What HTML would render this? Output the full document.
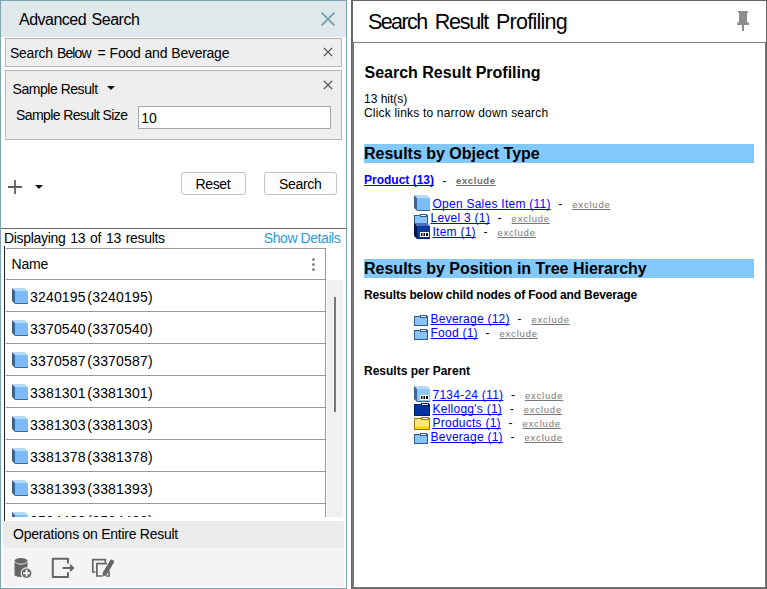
<!DOCTYPE html>
<html><head><meta charset="utf-8">
<style>
*{box-sizing:border-box;margin:0;padding:0}
html,body{width:767px;height:589px;overflow:hidden;background:#fff}
body{position:relative;font-family:"Liberation Sans",sans-serif;color:#000}
.a{position:absolute}
.t{position:absolute;white-space:pre;line-height:1}
.s14{font-size:14px}
.s12{font-size:12px}
.rw{letter-spacing:.18px;word-spacing:-2.5px}
svg{position:absolute;overflow:visible}
a{color:#0000ff;text-decoration:underline;text-decoration-skip-ink:none}
.ex{color:#777;font-size:9.5px;letter-spacing:.8px}
</style></head><body>
<svg width="0" height="0" style="position:absolute">
<defs>
<symbol id="cube" viewBox="0 0 16 16">
<polygon points="0,0 13,0 16,3 3,3" fill="#b5dafc"/>
<polygon points="0,0 3,3 3,16 0,13" fill="#3d6493"/>
<rect x="3" y="3" width="13" height="12" fill="#7cbcf8"/>
<rect x="3" y="15" width="13" height="1" fill="#3d6493"/>
</symbol>
</defs>
</svg>

<!-- LEFT PANEL -->
<div class="a" style="left:0;top:0;width:347px;height:589px;border:1px solid #7fa6ae;background:#fff"></div>
<div class="a" style="left:1px;top:1px;width:345px;height:36px;background:#dfe8eb"></div>
<div class="t" style="left:19px;top:12px;font-size:16px;letter-spacing:-.5px;word-spacing:1.5px">Advanced Search</div>
<svg style="left:321px;top:12px" width="14" height="14"><path d="M0.5 0.5L13.5 13.5M13.5 0.5L0.5 13.5" stroke="#7fa6ae" stroke-width="1.9"/></svg>

<div class="a" style="left:5px;top:38px;width:337px;height:29px;border:1px solid #b7b7b7;background:#eeeeee"></div>
<div class="t s14" style="left:10px;top:46px;letter-spacing:-.26px;word-spacing:.5px">Search <span style="letter-spacing:-.85px;margin-right:2.6px">Below</span> = Food and Beverage</div>
<svg style="left:323px;top:47px" width="10" height="10"><path d="M0.8 0.8L9.2 9.2M9.2 0.8L0.8 9.2" stroke="#484848" stroke-width="1.2"/></svg>

<div class="a" style="left:5px;top:70px;width:337px;height:70px;border:1px solid #b7b7b7;background:#eeeeee"></div>
<div class="t s14" style="left:12.5px;top:82px;letter-spacing:-.46px">Sample Result</div>
<svg style="left:107px;top:86px" width="9" height="5"><path d="M0 0H8L4 4Z" fill="#111"/></svg>
<svg style="left:323px;top:80px" width="10" height="10"><path d="M0.8 0.8L9.2 9.2M9.2 0.8L0.8 9.2" stroke="#484848" stroke-width="1.2"/></svg>
<div class="t s14" style="left:16px;top:108px;letter-spacing:-.6px">Sample Result Size</div>
<div class="a" style="left:138px;top:106px;width:193px;height:23px;border:1px solid #a3a7ab;background:#fff"></div>
<div class="t s14" style="left:141.2px;top:111px">10</div>

<svg style="left:8px;top:180px" width="14" height="14"><path d="M7 0V14M0 7H14" stroke="#606060" stroke-width="1.8"/></svg>
<svg style="left:35px;top:185px" width="9" height="5"><path d="M0 0H8L4 4Z" fill="#111"/></svg>

<div class="a" style="left:181px;top:172px;width:65px;height:23px;border:1px solid #c4c4c4;border-radius:3px;background:#fdfdfd"></div>
<div class="t s14" style="left:195.5px;top:177px;letter-spacing:-.35px">Reset</div>
<div class="a" style="left:264px;top:172px;width:73px;height:23px;border:1px solid #c4c4c4;border-radius:3px;background:#fdfdfd"></div>
<div class="t s14" style="left:279px;top:177px;letter-spacing:-.3px">Search</div>

<div class="a" style="left:1px;top:228px;width:345px;height:1px;background:#6a6a6a"></div>
<div class="t s14" style="left:3.9px;top:231px;letter-spacing:-.3px;word-spacing:1.2px">Displaying 13 of 13 results</div>
<div class="t s14" style="left:263.8px;top:231px;letter-spacing:-.43px;color:#2b9bd9">Show Details</div>

<!-- table -->
<div class="a" style="left:4px;top:246px;width:1px;height:275px;background:#222"></div>
<div class="a" style="left:6px;top:248px;width:320px;height:269px;border-top:1px solid #999;border-right:1px solid #999;background:#fff"></div>
<div class="a" style="left:6px;top:279px;width:320px;height:1px;background:#999"></div>
<div class="t s14" style="left:11.6px;top:257px;letter-spacing:-.2px">Name</div>
<div class="a" style="left:312.3px;top:257.5px;width:3px;height:3px;border-radius:50%;background:#888"></div>
<div class="a" style="left:312.3px;top:262.5px;width:3px;height:3px;border-radius:50%;background:#888"></div>
<div class="a" style="left:312.3px;top:267.5px;width:3px;height:3px;border-radius:50%;background:#888"></div>

<div class="a" style="left:6px;top:311px;width:319px;height:1px;background:#999"></div>
<div class="a" style="left:6px;top:343px;width:319px;height:1px;background:#999"></div>
<div class="a" style="left:6px;top:375px;width:319px;height:1px;background:#999"></div>
<div class="a" style="left:6px;top:407px;width:319px;height:1px;background:#999"></div>
<div class="a" style="left:6px;top:439px;width:319px;height:1px;background:#999"></div>
<div class="a" style="left:6px;top:471px;width:319px;height:1px;background:#999"></div>
<div class="a" style="left:6px;top:503px;width:319px;height:1px;background:#999"></div>

<svg style="left:12px;top:288px" width="16" height="16"><use href="#cube"/></svg>
<div class="t s14 rw" style="left:30px;top:290px">3240195 (3240195)</div>
<svg style="left:12px;top:320px" width="16" height="16"><use href="#cube"/></svg>
<div class="t s14 rw" style="left:30px;top:322px">3370540 (3370540)</div>
<svg style="left:12px;top:352px" width="16" height="16"><use href="#cube"/></svg>
<div class="t s14 rw" style="left:30px;top:354px">3370587 (3370587)</div>
<svg style="left:12px;top:384px" width="16" height="16"><use href="#cube"/></svg>
<div class="t s14 rw" style="left:30px;top:386px">3381301 (3381301)</div>
<svg style="left:12px;top:416px" width="16" height="16"><use href="#cube"/></svg>
<div class="t s14 rw" style="left:30px;top:418px">3381303 (3381303)</div>
<svg style="left:12px;top:448px" width="16" height="16"><use href="#cube"/></svg>
<div class="t s14 rw" style="left:30px;top:450px">3381378 (3381378)</div>
<svg style="left:12px;top:480px" width="16" height="16"><use href="#cube"/></svg>
<div class="t s14 rw" style="left:30px;top:482px">3381393 (3381393)</div>
<div class="a" style="left:5px;top:504px;width:320px;height:13px;overflow:hidden">
<svg style="left:7px;top:8px" width="16" height="16"><use href="#cube"/></svg>
<div class="t s14 rw" style="left:25px;top:10px">3504488 (3504488)</div>
</div>

<!-- scrollbar -->
<div class="a" style="left:327px;top:280px;width:16px;height:237px;background:#f0f0f0"></div>
<div class="a" style="left:334px;top:297px;width:2px;height:115px;background:#787878"></div>

<!-- operations -->
<div class="a" style="left:3px;top:521px;width:341px;height:27px;background:#ebebeb"></div>
<div class="t s14" style="left:13px;top:527px;letter-spacing:-.26px">Operations on Entire Result</div>
<div class="a" style="left:3px;top:548px;width:341px;height:39px;background:#f4f4f4"></div>

<!-- db icon -->
<svg style="left:14px;top:557px" width="20" height="22">
<ellipse cx="7" cy="3.85" rx="6.5" ry="2.85" fill="#666"/>
<path d="M0.5 4.9Q7 10.7 13.5 4.9V18.5Q7 21.5 0.5 18.5Z" fill="#666"/>
<circle cx="12.6" cy="16.2" r="5.9" fill="#f4f4f4"/>
<circle cx="12.6" cy="16.2" r="4.8" fill="#666"/>
<path d="M12.6 12.8V19.6M9.2 16.2H16" stroke="#fff" stroke-width="1.9"/>
</svg>
<!-- export icon -->
<svg style="left:51px;top:557px" width="26" height="22">
<path d="M17 6.5V1.8H1.8V20H17V15.2" fill="none" stroke="#666" stroke-width="2" stroke-linejoin="round"/>
<path d="M11.7 11H20" stroke="#666" stroke-width="2"/>
<path d="M19 6.8L23.5 11L19 15.2Z" fill="#666"/>
</svg>
<!-- edit icon -->
<svg style="left:88px;top:554px" width="30" height="28">
<path d="M7.5 18H4.8V5.6H17.3V8.8" fill="none" stroke="#666" stroke-width="1.7"/>
<path d="M14.5 22H8.9V9.6H19" fill="none" stroke="#666" stroke-width="1.7"/>
<path d="M18 22H21.1V17" fill="none" stroke="#666" stroke-width="1.7"/>
<path d="M23.8 7.8L16.8 19.3" stroke="#666" stroke-width="4.4" stroke-linecap="round"/>
<path d="M18.7 20.4L14.9 18.2L15 22.4Z" fill="#666"/>
</svg>

<!-- RIGHT PANEL -->
<div class="a" style="left:351px;top:0;width:416px;height:589px;border-top:1px solid #666;border-left:2px solid #666;border-right:1px solid #666;border-bottom:1px solid #666"></div>
<div class="a" style="left:353px;top:42px;width:413px;height:1px;background:#7a8087"></div>
<div class="a" style="left:352px;top:43px;width:414px;height:545px;border:1px solid #777;border-top:0;border-left:2px solid #777"></div>
<div class="t" style="left:368px;top:12px;font-size:21.5px;letter-spacing:-1.6px">Search</div>
<div class="t" style="left:434.8px;top:12px;font-size:21.5px;letter-spacing:-1.3px">Result</div>
<div class="t" style="left:496px;top:12px;font-size:21.5px;letter-spacing:-.75px">Profiling</div>
<svg style="left:737px;top:11px" width="13" height="20">
<path d="M1 0H11V1.8H10V10.8L12 12.3V14H0V12.3L2 10.8V1.8H1Z" fill="#8d8d8d"/>
<rect x="5" y="14" width="2" height="6" fill="#8d8d8d"/>
</svg>

<div class="t" style="left:364.5px;top:65px;font-size:16px;font-weight:700">Search Result Profiling</div>
<div class="t s12" style="left:364px;top:93px">13 hit(s)</div>
<div class="t s12" style="left:364px;top:107px;letter-spacing:.19px">Click links to narrow down search</div>

<div class="a" style="left:364px;top:144px;width:390px;height:19px;background:#82c8fa"></div>
<div class="t" style="left:364px;top:146px;font-size:16px;font-weight:700">Results by Object Type</div>
<div class="t s12" style="left:364px;top:174px;font-weight:700"><a>Product (13)</a></div>
<div class="t s12" style="left:442.5px;top:175px">-</div>
<div class="t ex" style="left:456px;top:176px;font-weight:700;letter-spacing:.6px"><a style="color:#6b6b6b">exclude</a></div>


<!-- symbols 2 -->
<svg width="0" height="0" style="position:absolute">
<defs>
<symbol id="fold14" viewBox="0 0 14 11">
<rect x="0.5" y="1.5" width="13" height="9" fill="#88c2f6" stroke="#2f5a88" stroke-width="1"/>
<rect x="6.5" y="0.5" width="6" height="2" fill="#fff" stroke="#2f5a88" stroke-width="1"/>
</symbol>
<symbol id="foldnavy" viewBox="0 0 16 13">
<rect x="0.5" y="1.5" width="15" height="11" fill="#0033a0" stroke="#001a66" stroke-width="1"/>
<rect x="7.5" y="0.5" width="7" height="2" fill="#fff" stroke="#001a66" stroke-width="1"/>
</symbol>
<symbol id="foldyel" viewBox="0 0 16 13">
<rect x="0.5" y="1.5" width="15" height="11" fill="#ffe680" stroke="#9c7a00" stroke-width="1"/>
<rect x="1" y="9.5" width="14" height="2.5" fill="#ffd200"/>
<rect x="7.5" y="0.5" width="7" height="2" fill="#fff" stroke="#9c7a00" stroke-width="1"/>
</symbol>
<symbol id="cubelab" viewBox="0 0 16 16">
<polygon points="0,0 13,0 16,3 3,3" fill="#b5dafc"/>
<polygon points="0,0 3,3 3,16 0,13" fill="#3d6493"/>
<rect x="3" y="3" width="13" height="12" fill="#8cc6f8"/>
<rect x="3" y="15" width="13" height="1" fill="#3d6493"/>
<rect x="6" y="9" width="9" height="5" fill="#fff"/>
<rect x="7" y="10" width="1.5" height="3" fill="#000"/><rect x="9.5" y="10" width="1.5" height="3" fill="#000"/><rect x="12" y="10" width="2" height="3" fill="#000"/>
</symbol>
<symbol id="cubenavy" viewBox="0 0 16 16">
<polygon points="0,0 13,0 16,3 3,3" fill="#4d6cc2"/>
<polygon points="0,0 3,3 3,16 0,13" fill="#001452"/>
<rect x="3" y="3" width="13" height="12" fill="#0a3a9c"/>
<rect x="3" y="15" width="13" height="1" fill="#001452"/>
<rect x="6" y="9" width="9" height="5" fill="#fff"/>
<rect x="7" y="10" width="1.5" height="3" fill="#000"/><rect x="9.5" y="10" width="1.5" height="3" fill="#000"/><rect x="12" y="10" width="2" height="3" fill="#000"/>
</symbol>
</defs>
</svg>
<style>
.ln{position:absolute;white-space:pre;font-size:12px;line-height:12px}
.ln a.lk{letter-spacing:.25px}
.hy{margin-left:7.6px}
.ln .ex{margin-left:10px}
</style>

<!-- list 1 -->
<svg style="left:414px;top:195px" width="16" height="16"><use href="#cube"/></svg>
<svg style="left:414px;top:214px" width="14" height="11"><use href="#fold14"/></svg>
<svg style="left:414px;top:223px" width="16" height="16"><use href="#cubenavy"/></svg>
<div class="ln" style="left:432.5px;top:198px"><a class="lk">Open Sales Item (11)</a><span class="hy">-</span><a class="ex">exclude</a></div>
<div class="ln" style="left:430.5px;top:212px"><a class="lk">Level 3 (1)</a><span class="hy">-</span><a class="ex">exclude</a></div>
<div class="ln" style="left:432.5px;top:226px"><a class="lk">Item (1)</a><span class="hy">-</span><a class="ex">exclude</a></div>

<div class="a" style="left:364px;top:259px;width:390px;height:19px;background:#82c8fa"></div>
<div class="t" style="left:364px;top:261px;font-size:16px;font-weight:700">Results by Position in Tree Hierarchy</div>
<div class="t s12" style="left:364px;top:289px;font-weight:700;letter-spacing:-.155px">Results below child nodes of Food and Beverage</div>

<!-- list 2 -->
<svg style="left:414px;top:315px" width="14" height="11"><use href="#fold14"/></svg>
<svg style="left:414px;top:329px" width="14" height="11"><use href="#fold14"/></svg>
<div class="ln" style="left:430.5px;top:313px"><a class="lk">Beverage (12)</a><span class="hy">-</span><a class="ex">exclude</a></div>
<div class="ln" style="left:430.5px;top:327px"><a class="lk">Food (1)</a><span class="hy">-</span><a class="ex">exclude</a></div>

<div class="t s12" style="left:364px;top:365px;font-weight:700">Results per Parent</div>

<!-- list 3 -->
<svg style="left:414px;top:386px" width="16" height="16"><use href="#cubelab"/></svg>
<svg style="left:414px;top:403px" width="16" height="13"><use href="#foldnavy"/></svg>
<svg style="left:414px;top:417px" width="16" height="13"><use href="#foldyel"/></svg>
<svg style="left:414px;top:433px" width="14" height="11"><use href="#fold14"/></svg>
<div class="ln" style="left:432.5px;top:389px"><a class="lk">7134-24 (11)</a><span class="hy">-</span><a class="ex">exclude</a></div>
<div class="ln" style="left:432.5px;top:403px"><a class="lk">Kellogg's (1)</a><span class="hy">-</span><a class="ex">exclude</a></div>
<div class="ln" style="left:432.5px;top:417px"><a class="lk">Products (1)</a><span class="hy">-</span><a class="ex">exclude</a></div>
<div class="ln" style="left:430.5px;top:431px"><a class="lk">Beverage (1)</a><span class="hy">-</span><a class="ex">exclude</a></div>

</body></html>
